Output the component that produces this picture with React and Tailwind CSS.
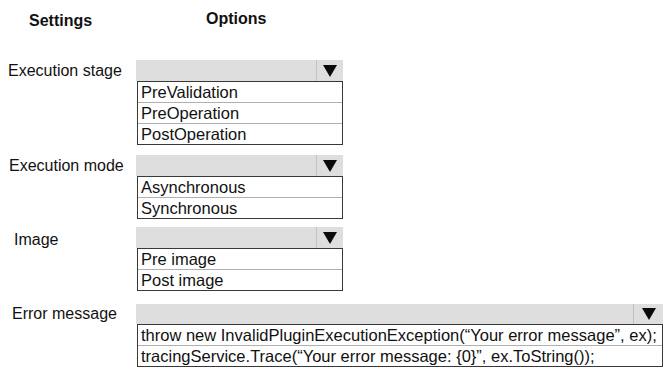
import React from "react";

function Arrow() {
  return (
    <svg width="14" height="12" viewBox="0 0 14 12" className="block">
      <polygon points="0,0 14,0 7,12" fill="#0a0a0a" />
    </svg>
  );
}

function Dropdown({ barClass, arrowClass, listClass, items }) {
  return (
    <div className="flex flex-col">
      <div className={"flex bg-[#dedede] " + barClass}>
        <div className="flex-1" />
        <div className={"flex items-center justify-center border-l border-[#c2c2c2] " + arrowClass}>
          <Arrow />
        </div>
      </div>
      <div className={"ml-[1px] border border-[#383838] bg-white " + listClass}>
        {items.map((t, i) => (
          <div
            key={i}
            className={
              "leading-[20px] pl-[3px] text-[16.5px] text-[#111] whitespace-nowrap overflow-hidden " +
              (i > 0 ? "h-[21px] border-t border-[#b0b0b0]" : "h-[20px]")
            }
          >
            {t}
          </div>
        ))}
      </div>
    </div>
  );
}

export default function App() {
  return (
    <div className="w-[666px] h-[374px] bg-white text-[#111] font-['Liberation_Sans',Arial,sans-serif] overflow-hidden">
      <div className="flex h-[60px] items-start">
        <div className="w-[206px] pl-[29px] pt-[12px] text-[16px] leading-[18px] font-bold">Settings</div>
        <div className="pt-[10px] text-[16px] leading-[18px] font-bold">Options</div>
      </div>

      <div className="flex items-start">
        <div className="w-[136px] h-[21px] flex items-center pl-[8px] text-[16px] leading-[18px]">Execution stage</div>
        <Dropdown
          barClass="w-[207px] h-[21px]"
          arrowClass="w-[27px]"
          listClass="w-[206px]"
          items={["PreValidation", "PreOperation", "PostOperation"]}
        />
      </div>

      <div className="flex items-start mt-[10px]">
        <div className="w-[136px] h-[21px] flex items-center pl-[9px] text-[16px] leading-[18px]">Execution mode</div>
        <Dropdown
          barClass="w-[207px] h-[21px]"
          arrowClass="w-[27px]"
          listClass="w-[206px]"
          items={["Asynchronous", "Synchronous"]}
        />
      </div>

      <div className="flex items-start mt-[8px]">
        <div className="w-[136px] h-[21px] flex items-center pl-[14px] pt-[5px] text-[16px] leading-[18px]">Image</div>
        <Dropdown
          barClass="w-[207px] h-[21px]"
          arrowClass="w-[27px]"
          listClass="w-[206px]"
          items={["Pre image", "Post image"]}
        />
      </div>

      <div className="flex items-start mt-[13px]">
        <div className="w-[136px] h-[20px] flex items-center pl-[12px] text-[16px] leading-[18px]">Error message</div>
        <Dropdown
          barClass="w-[527px] h-[20px]"
          arrowClass="w-[30px]"
          listClass="w-[526px]"
          items={[
            "throw new InvalidPluginExecutionException(\u201CYour error message\u201D, ex);",
            "tracingService.Trace(\u201CYour error message: {0}\u201D, ex.ToString());",
          ]}
        />
      </div>
    </div>
  );
}
